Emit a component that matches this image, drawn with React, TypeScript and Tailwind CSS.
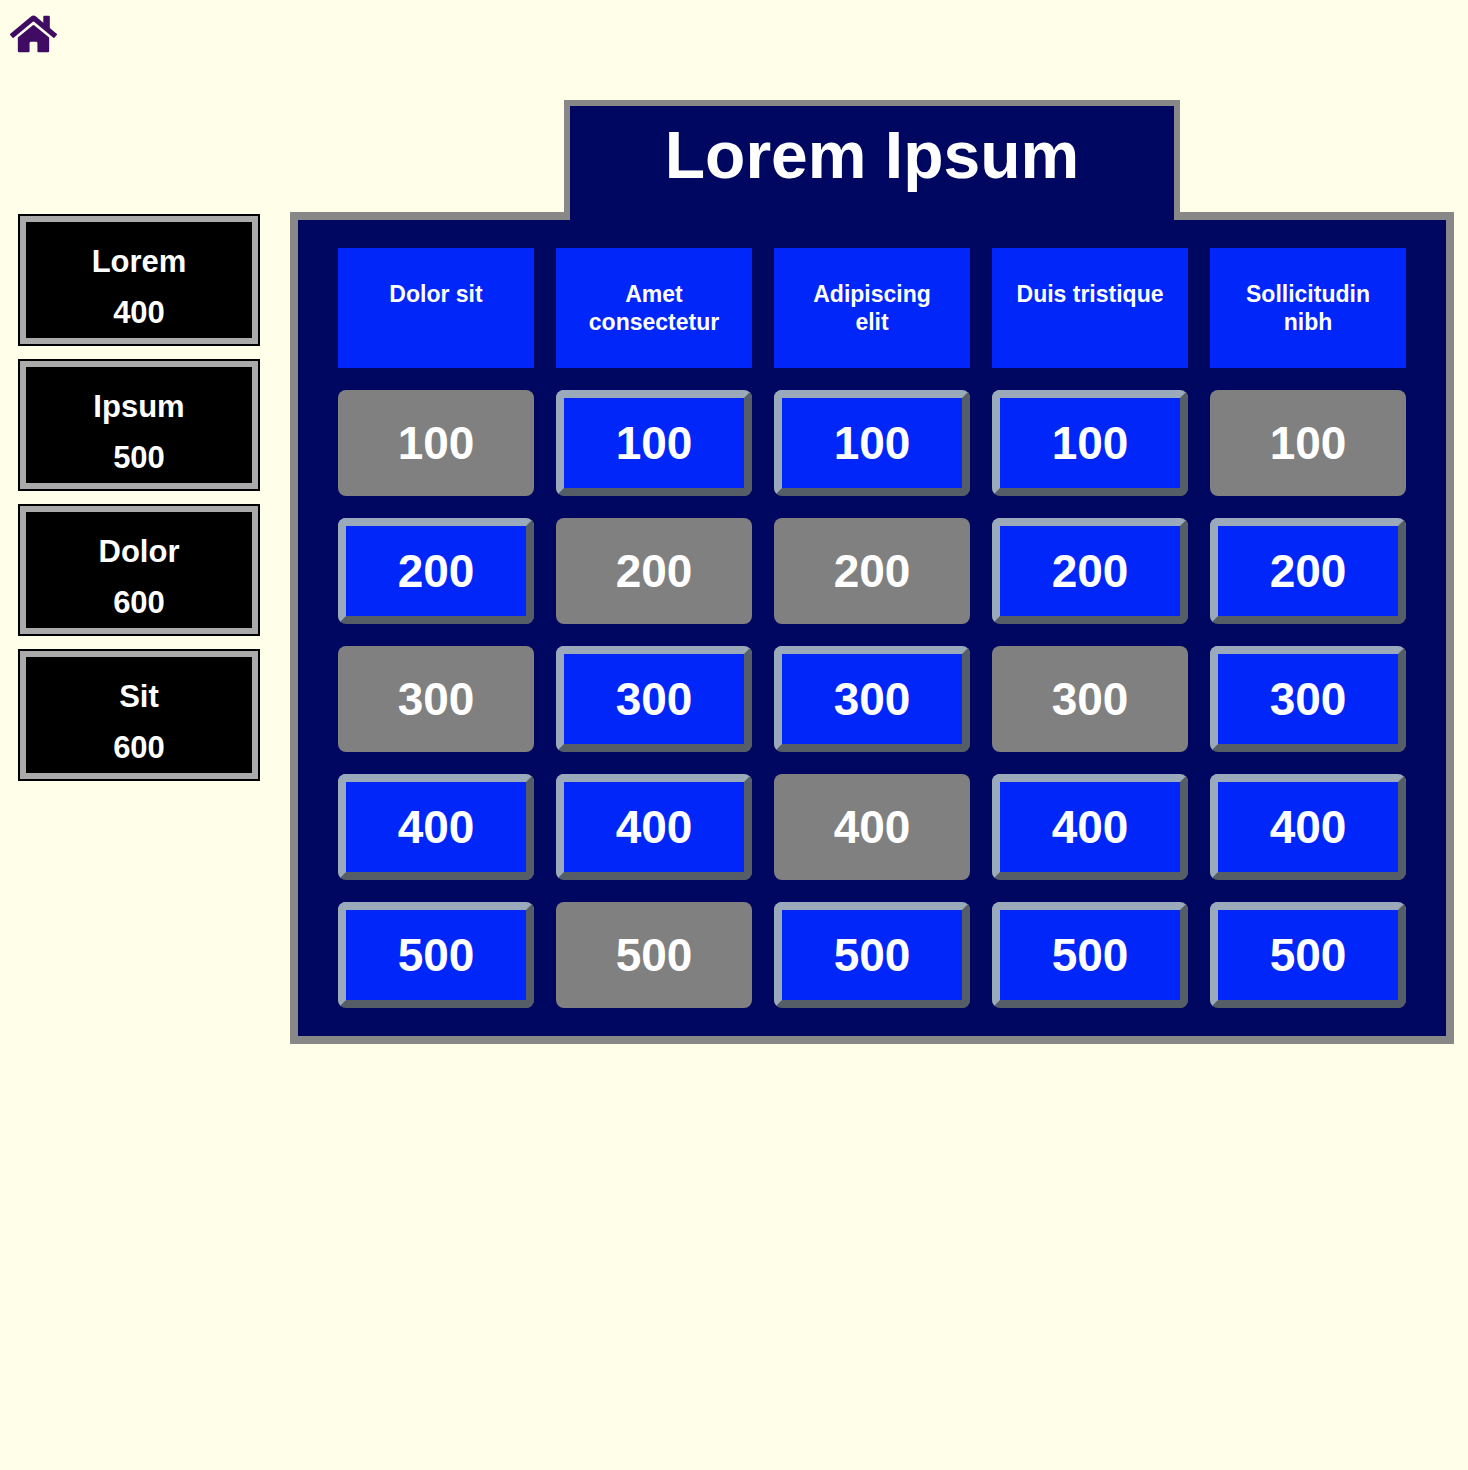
import { FaHome } from "react-icons/fa";

const players = [
  { name: "Lorem", score: 400 },
  { name: "Ipsum", score: 500 },
  { name: "Dolor", score: 600 },
  { name: "Sit", score: 600 },
];

const categories = ["Dolor sit", "Amet consectetur", "Adipiscing elit", "Duis tristique", "Sollicitudin nibh"];

const rows = [
  { value: 100, used: [true, false, false, false, true] },
  { value: 200, used: [false, true, true, false, false] },
  { value: 300, used: [true, false, false, true, false] },
  { value: 400, used: [false, false, true, false, false] },
  { value: 500, used: [false, true, false, false, false] },
];

function PlayerCard({ name, score }: { name: string; score: number }) {
  return (
    <li className="border-2 border-black">
      <div className="border-6 border-[#aaaaaa] bg-black px-2 pt-[14px] text-center text-[31px] leading-[51px] font-bold text-white">
        <p>{name}</p>
        <p>{score}</p>
      </div>
    </li>
  );
}

function Clue({ category, value, used }: { category: string; value: number; used: boolean }) {
  return (
    <button
      type="button"
      disabled={used}
      aria-label={`${category} ${value}`}
      className={
        used
          ? "h-[106px] rounded-lg bg-[#808080] text-[46px] leading-none font-bold text-white"
          : "h-[106px] cursor-pointer rounded-lg border-8 border-t-[#9aaaba] border-r-[#555e66] border-b-[#555e66] border-l-[#9aaaba] bg-[#0026f9] text-[46px] leading-none font-bold text-white"
      }
    >
      {value}
    </button>
  );
}

export default function App() {
  return (
    <div className="min-h-screen bg-[#fffee8] font-['Liberation_Sans',Arial,sans-serif]">
      <header className="flex h-[100px] items-start px-[10px] pt-[13px]">
        <a href="#home" aria-label="Home" className="text-[#400b63]">
          <FaHome className="h-[42px] w-[47px]" />
        </a>
      </header>

      <main className="flex items-start gap-[30px] pr-[14px] pl-[18px]">
        <aside className="mt-[114px] w-[242px] shrink-0">
          <ul className="flex flex-col gap-[13px]">
            {players.map((p) => (
              <PlayerCard key={p.name} name={p.name} score={p.score} />
            ))}
          </ul>
        </aside>

        <section className="flex min-w-0 flex-1 flex-col items-center">
          <h1 className="relative -mb-2 h-[120px] w-[616px] max-w-full border-6 border-b-0 border-[#888888] bg-[#000760] text-center text-[66px] leading-[98px] font-bold text-white">
            Lorem Ipsum
          </h1>
          <div className="grid w-full grid-cols-5 gap-[22px] border-8 border-[#888888] bg-[#000760] px-10 py-7">
            {categories.map((c) => (
              <h2
                key={c}
                className="h-[120px] bg-[#0026f9] px-5 pt-8 text-center text-[23px] leading-7 font-bold text-white"
              >
                {c}
              </h2>
            ))}
            {rows.map((row) =>
              row.used.map((used, i) => (
                <Clue key={`${row.value}-${i}`} category={categories[i]} value={row.value} used={used} />
              )),
            )}
          </div>
        </section>
      </main>
    </div>
  );
}
